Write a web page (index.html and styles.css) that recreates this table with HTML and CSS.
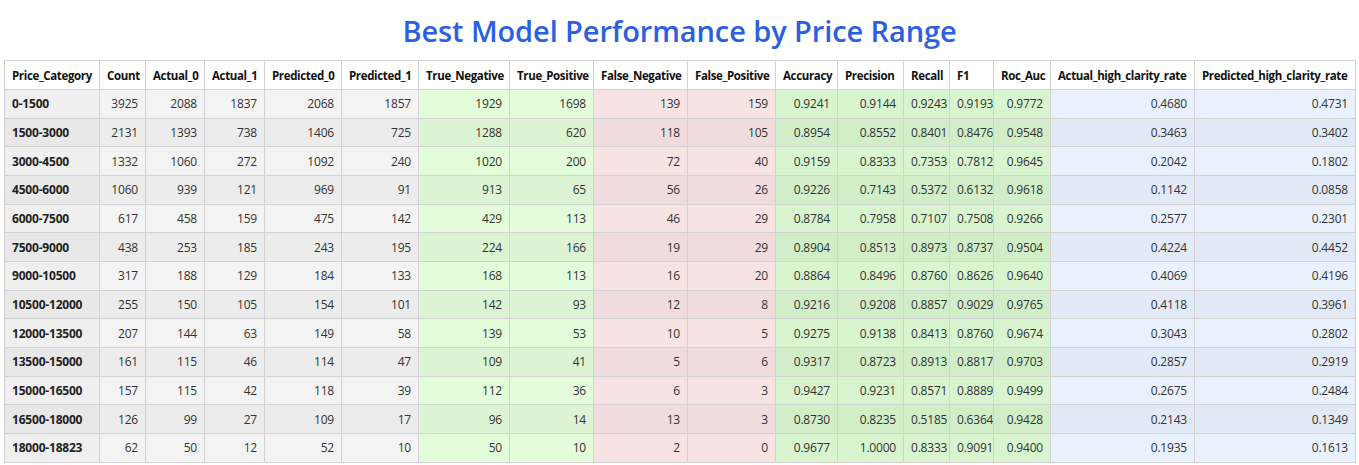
FILE: index.html
```html
<!DOCTYPE html>
<html>
<head>
<meta charset="utf-8">
<link rel="stylesheet" href="styles.css">
</head>
<body>
<div class="page">
<h1 class="title">Best Model Performance by Price Range</h1>
<table class="perf">
<colgroup>
<col style="width:95px"><col style="width:46px"><col style="width:59px"><col style="width:60px"><col style="width:77px"><col style="width:77px"><col style="width:91px"><col style="width:84px"><col style="width:94px"><col style="width:88px"><col style="width:62px"><col style="width:66px"><col style="width:46px"><col style="width:44px"><col style="width:57px"><col style="width:144px"><col style="width:161px">
</colgroup>
<thead>
<tr>
<th>Price_Category</th><th>Count</th><th>Actual_0</th><th>Actual_1</th><th>Predicted_0</th><th>Predicted_1</th><th>True_Negative</th><th>True_Positive</th><th>False_Negative</th><th>False_Positive</th><th>Accuracy</th><th>Precision</th><th>Recall</th><th>F1</th><th>Roc_Auc</th><th>Actual_high_clarity_rate</th><th>Predicted_high_clarity_rate</th>
</tr>
</thead>
<tbody id="rows"></tbody>
</table>
</div>
<script>
var data = [
["0-1500",3925,2088,1837,2068,1857,1929,1698,139,159,"0.9241","0.9144","0.9243","0.9193","0.9772","0.4680","0.4731"],
["1500-3000",2131,1393,738,1406,725,1288,620,118,105,"0.8954","0.8552","0.8401","0.8476","0.9548","0.3463","0.3402"],
["3000-4500",1332,1060,272,1092,240,1020,200,72,40,"0.9159","0.8333","0.7353","0.7812","0.9645","0.2042","0.1802"],
["4500-6000",1060,939,121,969,91,913,65,56,26,"0.9226","0.7143","0.5372","0.6132","0.9618","0.1142","0.0858"],
["6000-7500",617,458,159,475,142,429,113,46,29,"0.8784","0.7958","0.7107","0.7508","0.9266","0.2577","0.2301"],
["7500-9000",438,253,185,243,195,224,166,19,29,"0.8904","0.8513","0.8973","0.8737","0.9504","0.4224","0.4452"],
["9000-10500",317,188,129,184,133,168,113,16,20,"0.8864","0.8496","0.8760","0.8626","0.9640","0.4069","0.4196"],
["10500-12000",255,150,105,154,101,142,93,12,8,"0.9216","0.9208","0.8857","0.9029","0.9765","0.4118","0.3961"],
["12000-13500",207,144,63,149,58,139,53,10,5,"0.9275","0.9138","0.8413","0.8760","0.9674","0.3043","0.2802"],
["13500-15000",161,115,46,114,47,109,41,5,6,"0.9317","0.8723","0.8913","0.8817","0.9703","0.2857","0.2919"],
["15000-16500",157,115,42,118,39,112,36,6,3,"0.9427","0.9231","0.8571","0.8889","0.9499","0.2675","0.2484"],
["16500-18000",126,99,27,109,17,96,14,13,3,"0.8730","0.8235","0.5185","0.6364","0.9428","0.2143","0.1349"],
["18000-18823",62,50,12,52,10,50,10,2,0,"0.9677","1.0000","0.8333","0.9091","0.9400","0.1935","0.1613"]
];
var cls = ["cat","num","num","num","num","num","tru","tru","fal","fal","met","met","met","met","met","rate","rate"];
var tb = document.getElementById("rows");
data.forEach(function(r){
  var tr = document.createElement("tr");
  r.forEach(function(v,i){
    var td = document.createElement("td");
    td.className = cls[i];
    td.textContent = v;
    tr.appendChild(td);
  });
  tb.appendChild(tr);
});
</script>
</body>
</html>
```
FILE: styles.css
```css
html, body {
  margin: 0;
  padding: 0;
  background: #ffffff;
}
.page {
  padding: 0 4px;
  font-family: "Open Sans", "Noto Sans", sans-serif;
}
.title {
  margin: 0;
  padding-top: 13px;
  height: 60px;
  box-sizing: border-box;
  text-align: center;
  font-size: 29px;
  line-height: 36px;
  font-weight: 600;
  color: #2b60de;
  letter-spacing: -0.1px;
}
.perf {
  border-collapse: collapse;
  table-layout: fixed;
  width: 1351px;
  font-size: 12px;
  color: #333;
}
.perf th, .perf td {
  border: 1px solid #d2d2d2;
  padding: 0 7px;
  white-space: nowrap;
  overflow: hidden;
}
.perf th {
  height: 28px;
  text-align: left;
  font-size: 11.5px;
  font-weight: 700;
  color: #111;
  background: #fff;
  letter-spacing: -0.35px;
}
.perf tbody tr {
  height: 28.67px;
}
.perf td {
  text-align: right;
  letter-spacing: -0.2px;
}
.perf td.cat {
  text-align: left;
  font-weight: 700;
  color: #222;
  background: #efefef;
}
.perf td.num { background: #f3f3f3; }
.perf td.tru { background: #e3fcd9; }
.perf td.fal { background: #f8e3e3; }
.perf td.met { background: #d8f5d0; }
.perf td.rate { background: #e8f1fd; }
.perf tbody tr:nth-child(even) td.cat { background: #e8e8e8; }
.perf tbody tr:nth-child(even) td.num { background: #ececec; }
.perf tbody tr:nth-child(even) td.tru { background: #dcf4d3; }
.perf tbody tr:nth-child(even) td.fal { background: #f0dcdc; }
.perf tbody tr:nth-child(even) td.met { background: #d1eec9; }
.perf tbody tr:nth-child(even) td.rate { background: #e1eaf6; }
```
